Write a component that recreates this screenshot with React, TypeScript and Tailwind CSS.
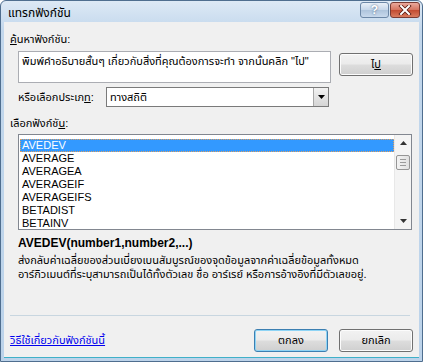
import React from 'react'

const FONT = "font-['Liberation_Sans','Noto_Sans','Noto_Sans_Thai','DejaVu_Sans',sans-serif]"

const FUNCS = ['AVEDEV', 'AVERAGE', 'AVERAGEA', 'AVERAGEIF', 'AVERAGEIFS', 'BETADIST', 'BETAINV']

function VistaButton({ children, isDefault }: { children: React.ReactNode; isDefault?: boolean }) {
  return (
    <button
      className={
        'h-[23px] w-[74px] rounded-[3px] border text-[11px] text-black bg-[linear-gradient(#f2f2f2_0%,#ebebeb_48%,#dddddd_52%,#cfcfcf_100%)] ' +
        (isDefault ? 'border-[#3c7fb1] shadow-[inset_0_0_0_1px_#8ed4f5]' : 'border-[#707070] shadow-[inset_0_0_0_1px_#fcfcfc]')
      }
    >
      {children}
    </button>
  )
}

export default function App() {
  return (
    <div className={`w-[423px] h-[362px] flex flex-col bg-[linear-gradient(#dde9f5,#c2d7ec_30px,#bcd3ea)] border border-[#4f6e8f] rounded-t-[6px] ${FONT} text-[11px] text-black`}>
      {/* title bar */}
      <div className="h-[21px] flex items-center pl-[7px] pr-[2px]">
        <span className="text-[12px] pt-[3px] flex-1">แทรกฟังก์ชัน</span>
        <div className="flex self-start mt-[1px] gap-[1px]">
          <div className="w-[29px] h-[16px] rounded-[3px] border border-[#6c87a6] bg-[linear-gradient(#e9f0f8,#c5d6e9_50%,#aec4dc_51%,#c8d9ec)] flex items-center justify-center text-[12px] font-bold text-white [text-shadow:0_0_2px_#3a5574]">
            ?
          </div>
          <div className="w-[30px] h-[16px] rounded-[3px] border border-[#7a3b33] bg-[linear-gradient(#eaa99c,#d4735e_50%,#c24a30_51%,#d97b5e)] flex items-center justify-center">
            <svg width="14" height="10" viewBox="0 0 14 10">
              <path d="M3 1 L11 9 M11 1 L3 9" stroke="#5a1a10" strokeWidth="3.6" strokeLinecap="square" />
              <path d="M3 1 L11 9 M11 1 L3 9" stroke="#ffffff" strokeWidth="2" strokeLinecap="square" />
            </svg>
          </div>
        </div>
      </div>

      {/* client area */}
      <div className="flex-1 mx-[3px] mb-[3px] bg-[#f0f0f0] border-b border-[#3fb0c8] flex flex-col pl-[6px] pr-[5px]">
        <div className="mt-[11px] leading-[12px]">
          <span className="underline">ค้</span>นหาฟังก์ชัน:
        </div>

        <div className="flex mt-[6px] pl-[8px]">
          <div className="w-[313px] h-[32px] border border-[#abadb3] bg-white px-[3px] pt-[3px] leading-[13px]">
            พิมพ์คำอธิบายสั้นๆ เกี่ยวกับสิ่งที่คุณต้องการจะทำ จากนั้นคลิก "ไป"
          </div>
          <div className="ml-[8px] mt-[2px]">
            <VistaButton>
              ไ<span className="underline">ป</span>
            </VistaButton>
          </div>
        </div>

        <div className="flex items-center mt-[4px] pl-[8px]">
          <span className="w-[88px]">
            หรือเลือกประเภ<span className="underline">ท</span>:
          </span>
          <div className="w-[223px] h-[20px] border border-[#7a7a7a] bg-white flex items-center">
            <span className="flex-1 pl-[3px]">ทางสถิติ</span>
            <div className="w-[15px] h-[18px] bg-[linear-gradient(#f2f2f2,#d5d5d5)] border-l border-[#a8a8a8] flex items-center justify-center">
              <svg width="7" height="4" viewBox="0 0 7 4">
                <path d="M0 0 H7 L3.5 4 Z" fill="#000" />
              </svg>
            </div>
          </div>
        </div>

        <div className="mt-[10px] leading-[12px]">
          เลือกฟังก์ชั<span className="underline">น</span>:
        </div>

        <div className="ml-[8px] mr-[2px] mt-[5px] h-[96px] border border-[#828790] bg-white flex">
          <div className="flex-1 pt-[4px] pl-[1px]">
            {FUNCS.map((f, i) => (
              <div
                key={f}
                className={
                  "h-[13px] leading-[13px] pl-[2px] font-['Liberation_Sans',sans-serif] text-[11px] " +
                  (i === 0 ? 'bg-[#3399ff] text-white outline-1 outline-dotted outline-[#e0a060] -outline-offset-1' : '')
                }
              >
                {f}
              </div>
            ))}
          </div>
          <div className="w-[17px] bg-[#f4f4f4] border-l border-[#e8e8e8] flex flex-col items-center">
            <svg className="mt-[6px]" width="7" height="4" viewBox="0 0 7 4">
              <path d="M0 4 H7 L3.5 0 Z" fill="#333" />
            </svg>
            <div className="mt-[10px] w-[14px] h-[15px] rounded-[2px] border border-[#959595] bg-[linear-gradient(90deg,#f3f3f3,#e0e0e0)] flex flex-col items-center justify-center gap-[2px]">
              <div className="w-[6px] h-[1px] bg-[#9a9a9a]" />
              <div className="w-[6px] h-[1px] bg-[#9a9a9a]" />
              <div className="w-[6px] h-[1px] bg-[#9a9a9a]" />
            </div>
            <div className="flex-1" />
            <svg className="mb-[6px]" width="7" height="4" viewBox="0 0 7 4">
              <path d="M0 0 H7 L3.5 4 Z" fill="#333" />
            </svg>
          </div>
        </div>

        <div className="mt-[6px] pl-[8px] font-bold text-[12px] leading-[14px] font-['Liberation_Sans',sans-serif]">
          AVEDEV(number1,number2,...)
        </div>
        <div className="pl-[8px] mt-[3px] leading-[14px]">
          <div>ส่งกลับค่าเฉลี่ยของส่วนเบี่ยงเบนสัมบูรณ์ของจุดข้อมูลจากค่าเฉลี่ยข้อมูลทั้งหมด</div>
          <div>อาร์กิวเมนต์ที่ระบุสามารถเป็นได้ทั้งตัวเลข ชื่อ อาร์เรย์ หรือการอ้างอิงที่มีตัวเลขอยู่.</div>
        </div>

        <div className="flex-1" />
        <div className="h-[1px] bg-[#c8d6e0] mr-[4px]" />

        <div className="flex items-start pt-[13px] pb-[5px]">
          <a className="flex-1 mt-[3px] text-[#0000ee] underline">วิธีใช้เกี่ยวกับฟังก์ชันนี้</a>
          <div className="flex gap-[11px] mr-[1px]">
            <VistaButton isDefault>ตกลง</VistaButton>
            <VistaButton>ยกเลิก</VistaButton>
          </div>
        </div>
      </div>
    </div>
  )
}
